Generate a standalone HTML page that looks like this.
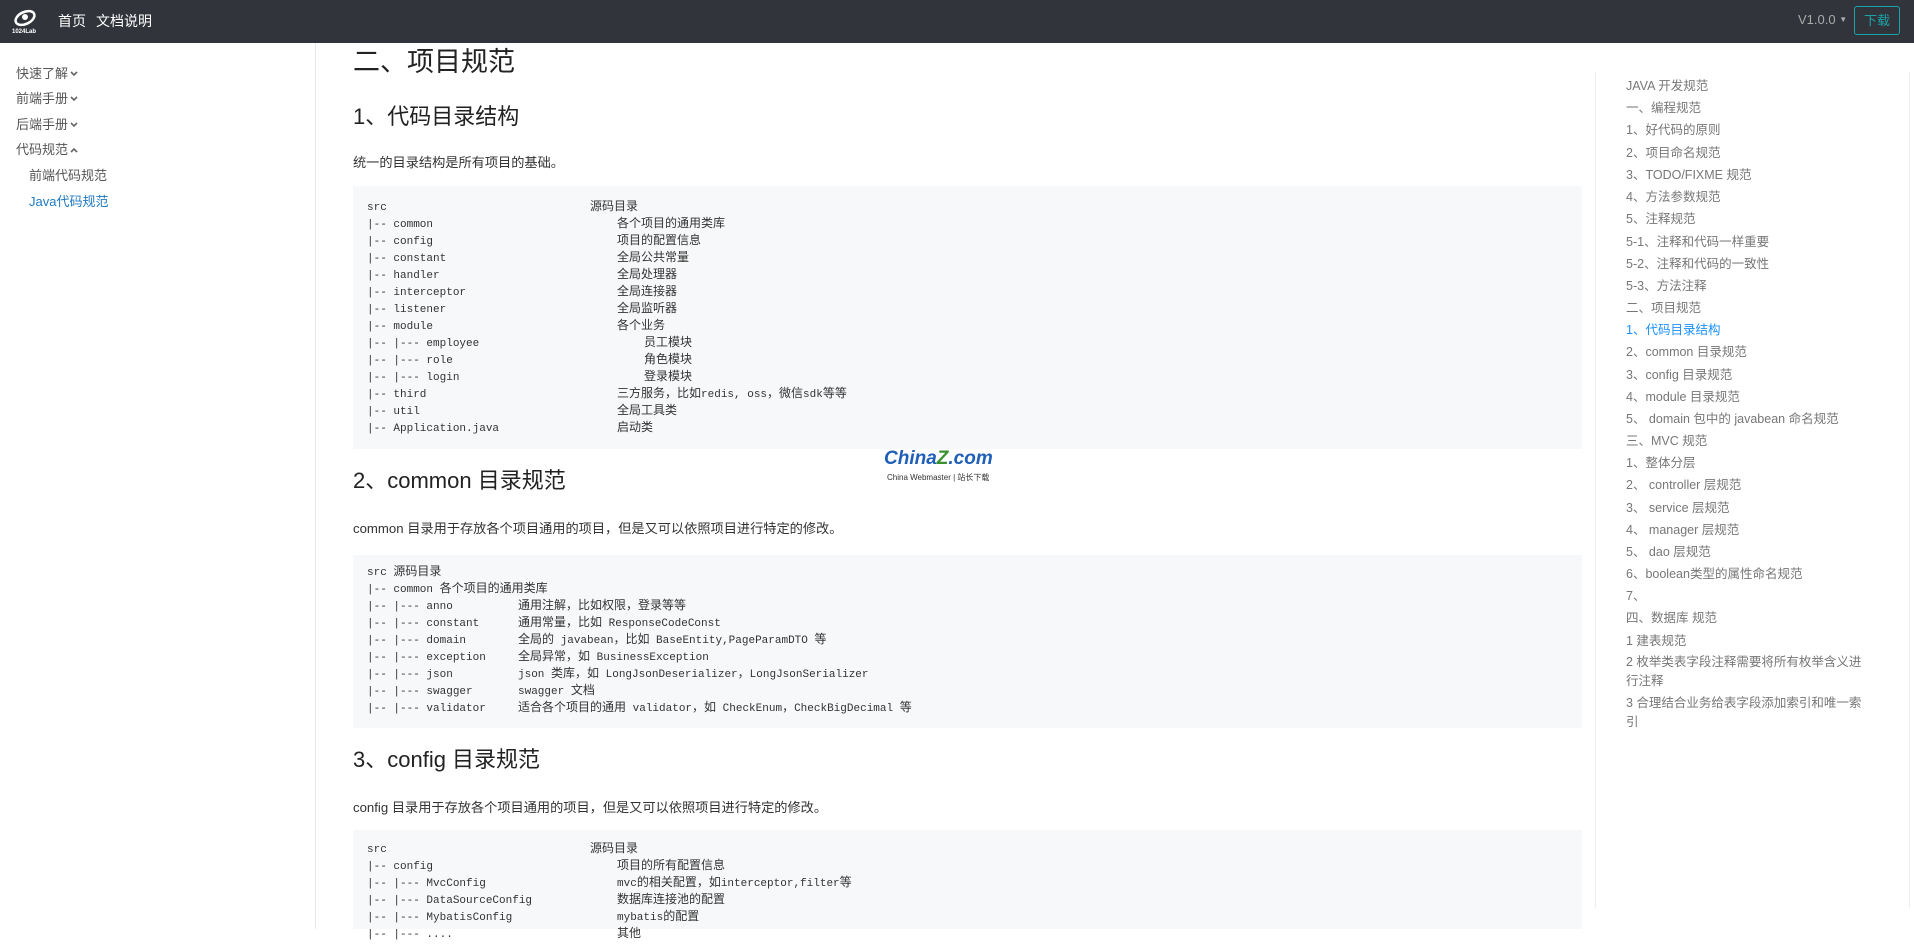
<!DOCTYPE html>
<html><head><meta charset="utf-8">
<style>
*{margin:0;padding:0;box-sizing:border-box}
body{width:1914px;height:929px;overflow:hidden;background:#fff;font-family:"Liberation Sans","Noto Sans CJK SC",sans-serif;color:#333;position:relative}
.nav{position:absolute;left:0;top:0;width:1914px;height:43px;background:#31353b}
.abs{position:absolute;white-space:nowrap}
.side{position:absolute;left:0;top:43px;width:316px;height:886px;border-right:1px solid #e8e8e8}
.si{position:absolute;font-size:13px;color:#555;line-height:18px}
.si svg{vertical-align:1px;margin-left:2px}
.h1{font-size:27px;color:#222}
.h2{font-size:22px;color:#222}
.p{font-size:13.2px;color:#333}
.pre{position:absolute;left:353px;width:1229px;background:#f6f8fa}
.code{position:absolute;left:367px;font-family:"Liberation Mono","Noto Sans CJK SC",monospace;font-size:11px;color:#333}
.code div{height:17px;line-height:17px;white-space:pre;overflow:visible}
.code span.a{display:inline-block}
.cn{font-family:"Liberation Sans","Noto Sans CJK SC",sans-serif;font-size:12px}
.toc{position:absolute;left:1595px;top:72px;width:315px;height:836px;border-left:1px solid #eee;border-right:1px solid #eee}
.t{position:absolute;left:1626px;font-size:12.5px;color:#777;line-height:22px;width:238px}
</style></head><body>
<div class="nav">
 <svg class="abs" style="left:12px;top:7px" width="30" height="28" viewBox="0 0 30 28"><ellipse cx="13" cy="11" rx="10" ry="6" fill="none" stroke="#fff" stroke-width="2.5" transform="rotate(-25 13 11)"/><circle cx="13" cy="10" r="3" fill="#fff"/><text x="0" y="26" font-size="6" fill="#fff" font-family="Liberation Sans" font-weight="bold">1024Lab</text></svg>
 <div class="abs" style="left:58px;top:11px;color:#fff;font-size:14px">首页</div>
 <div class="abs" style="left:96px;top:11px;color:#fff;font-size:14px">文档说明</div>
 <div class="abs" style="left:1798px;top:12px;color:#aaa;font-size:13px">V1.0.0 <span style="font-size:8px;vertical-align:2px">▼</span></div>
 <div class="abs" style="left:1854px;top:6px;width:46px;height:29px;border:1px solid #1aa3a8;border-radius:3px;color:#1aa3a8;font-size:13px;text-align:center;line-height:27px">下载</div>
</div>
<div class="side">
 <div class="si" style="left:16px;top:22px">快速了解<svg width="8" height="6" viewBox="0 0 8 6"><path d="M1 1l3 3 3-3" stroke="#666" stroke-width="1.6" fill="none"/></svg></div>
 <div class="si" style="left:16px;top:47px">前端手册<svg width="8" height="6" viewBox="0 0 8 6"><path d="M1 1l3 3 3-3" stroke="#666" stroke-width="1.6" fill="none"/></svg></div>
 <div class="si" style="left:16px;top:73px">后端手册<svg width="8" height="6" viewBox="0 0 8 6"><path d="M1 1l3 3 3-3" stroke="#666" stroke-width="1.6" fill="none"/></svg></div>
 <div class="si" style="left:16px;top:98px">代码规范<svg width="8" height="6" viewBox="0 0 8 6"><path d="M1 5l3-3 3 3" stroke="#666" stroke-width="1.6" fill="none"/></svg></div>
 <div class="si" style="left:29px;top:124px">前端代码规范</div>
 <div class="si" style="left:29px;top:150px;color:#1f7ac2">Java代码规范</div>
</div>
<div class="abs h1" style="left:353px;top:40px">二、项目规范</div>
<div class="abs h2" style="left:353px;top:99px">1、代码目录结构</div>
<div class="abs p" style="left:353px;top:152px">统一的目录结构是所有项目的基础。</div>
<div class="pre" style="top:186px;height:263px"></div>
<div class="code" style="top:198px">
<div><span class="a" style="width:223px">src</span><span class="cn">源码目录</span></div>
<div><span class="a" style="width:250px">|-- common</span><span class="cn">各个项目的通用类库</span></div>
<div><span class="a" style="width:250px">|-- config</span><span class="cn">项目的配置信息</span></div>
<div><span class="a" style="width:250px">|-- constant</span><span class="cn">全局公共常量</span></div>
<div><span class="a" style="width:250px">|-- handler</span><span class="cn">全局处理器</span></div>
<div><span class="a" style="width:250px">|-- interceptor</span><span class="cn">全局连接器</span></div>
<div><span class="a" style="width:250px">|-- listener</span><span class="cn">全局监听器</span></div>
<div><span class="a" style="width:250px">|-- module</span><span class="cn">各个业务</span></div>
<div><span class="a" style="width:277px">|-- |--- employee</span><span class="cn">员工模块</span></div>
<div><span class="a" style="width:277px">|-- |--- role</span><span class="cn">角色模块</span></div>
<div><span class="a" style="width:277px">|-- |--- login</span><span class="cn">登录模块</span></div>
<div><span class="a" style="width:250px">|-- third</span><span class="cn">三方服务，比如</span>redis, oss<span class="cn">，微信</span>sdk<span class="cn">等等</span></div>
<div><span class="a" style="width:250px">|-- util</span><span class="cn">全局工具类</span></div>
<div><span class="a" style="width:250px">|-- Application.java</span><span class="cn">启动类</span></div>
</div>
<div class="abs" style="left:884px;top:448px;font-size:19px;font-weight:bold;font-style:italic;color:#1f5fb8">China<span style="color:#3a8f2e">Z</span>.com</div>
<div class="abs" style="left:887px;top:472px;font-size:8px;color:#333">China Webmaster | 站长下载</div>
<div class="abs h2" style="left:353px;top:463px">2、common 目录规范</div>
<div class="abs p" style="left:353px;top:518px">common 目录用于存放各个项目通用的项目，但是又可以依照项目进行特定的修改。</div>
<div class="pre" style="top:555px;height:173px"></div>
<div class="code" style="top:563px">
<div>src <span class="cn">源码目录</span></div>
<div>|-- common <span class="cn">各个项目的通用类库</span></div>
<div><span class="a" style="width:151px">|-- |--- anno</span><span class="cn">通用注解，比如权限，登录等等</span></div>
<div><span class="a" style="width:151px">|-- |--- constant</span><span class="cn">通用常量，比如</span> ResponseCodeConst</div>
<div><span class="a" style="width:151px">|-- |--- domain</span><span class="cn">全局的</span> javabean<span class="cn">，比如</span> BaseEntity,PageParamDTO <span class="cn">等</span></div>
<div><span class="a" style="width:151px">|-- |--- exception</span><span class="cn">全局异常，如</span> BusinessException</div>
<div><span class="a" style="width:151px">|-- |--- json</span>json <span class="cn">类库，如</span> LongJsonDeserializer<span class="cn">，</span>LongJsonSerializer</div>
<div><span class="a" style="width:151px">|-- |--- swagger</span>swagger <span class="cn">文档</span></div>
<div><span class="a" style="width:151px">|-- |--- validator</span><span class="cn">适合各个项目的通用</span> validator<span class="cn">，如</span> CheckEnum<span class="cn">，</span>CheckBigDecimal <span class="cn">等</span></div>
</div>
<div class="abs h2" style="left:353px;top:742px">3、config 目录规范</div>
<div class="abs p" style="left:353px;top:797px">config 目录用于存放各个项目通用的项目，但是又可以依照项目进行特定的修改。</div>
<div class="pre" style="top:830px;height:99px"></div>
<div class="code" style="top:840px">
<div><span class="a" style="width:223px">src</span><span class="cn">源码目录</span></div>
<div><span class="a" style="width:250px">|-- config</span><span class="cn">项目的所有配置信息</span></div>
<div><span class="a" style="width:250px">|-- |--- MvcConfig</span>mvc<span class="cn">的相关配置，如</span>interceptor,filter<span class="cn">等</span></div>
<div><span class="a" style="width:250px">|-- |--- DataSourceConfig</span><span class="cn">数据库连接池的配置</span></div>
<div><span class="a" style="width:250px">|-- |--- MybatisConfig</span>mybatis<span class="cn">的配置</span></div>
<div><span class="a" style="width:250px">|-- |--- ....</span><span class="cn">其他</span></div>
</div>
<div class="toc"></div>
<div class="t" style="top:75px">JAVA 开发规范</div>
<div class="t" style="top:97px">一、编程规范</div>
<div class="t" style="top:119px">1、好代码的原则</div>
<div class="t" style="top:142px">2、项目命名规范</div>
<div class="t" style="top:164px">3、TODO/FIXME 规范</div>
<div class="t" style="top:186px">4、方法参数规范</div>
<div class="t" style="top:208px">5、注释规范</div>
<div class="t" style="top:231px">5-1、注释和代码一样重要</div>
<div class="t" style="top:253px">5-2、注释和代码的一致性</div>
<div class="t" style="top:275px">5-3、方法注释</div>
<div class="t" style="top:297px">二、项目规范</div>
<div class="t" style="top:319px;color:#1890ff">1、代码目录结构</div>
<div class="t" style="top:341px">2、common 目录规范</div>
<div class="t" style="top:364px">3、config 目录规范</div>
<div class="t" style="top:386px">4、module 目录规范</div>
<div class="t" style="top:408px">5、 domain 包中的 javabean 命名规范</div>
<div class="t" style="top:430px">三、MVC 规范</div>
<div class="t" style="top:452px">1、整体分层</div>
<div class="t" style="top:474px">2、 controller 层规范</div>
<div class="t" style="top:497px">3、 service 层规范</div>
<div class="t" style="top:519px">4、 manager 层规范</div>
<div class="t" style="top:541px">5、 dao 层规范</div>
<div class="t" style="top:563px">6、boolean类型的属性命名规范</div>
<div class="t" style="top:585px">7、</div>
<div class="t" style="top:607px">四、数据库 规范</div>
<div class="t" style="top:630px">1 建表规范</div>
<div class="t" style="top:653px;line-height:19px">2 枚举类表字段注释需要将所有枚举含义进行注释</div>
<div class="t" style="top:694px;line-height:19px">3 合理结合业务给表字段添加索引和唯一索引</div>
</body></html>
